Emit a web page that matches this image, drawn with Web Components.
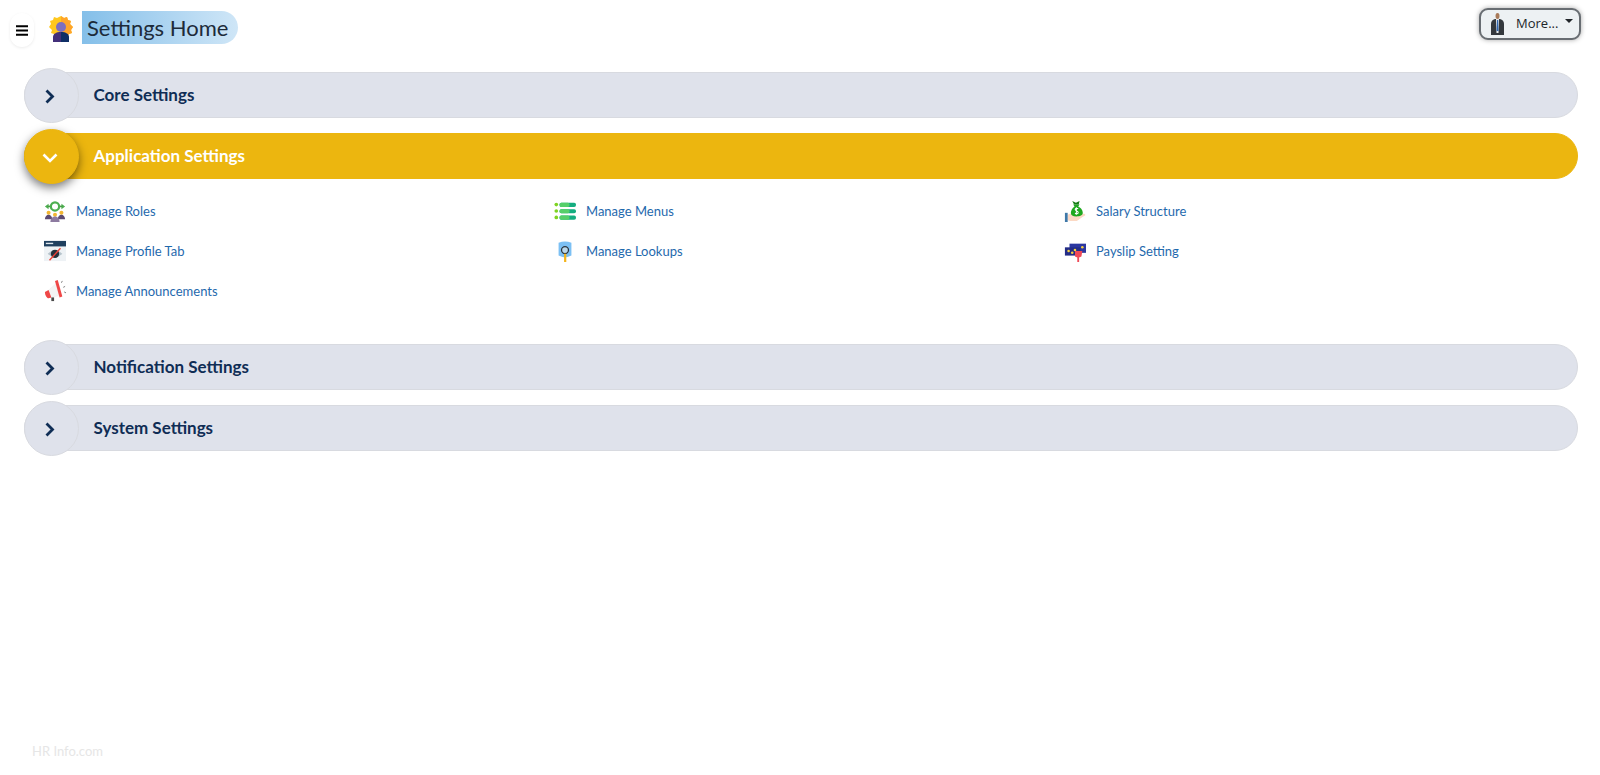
<!DOCTYPE html>
<html lang="en">
<head>
<meta charset="utf-8">
<title>Settings Home</title>
<style>
  html, body { margin:0; height:100%; background:#fff; font-family:Lato,"Open Sans",sans-serif; }
  body { display:flex; flex-direction:column; height:775px; overflow:hidden; }
  main { display:block; padding:0 22px 0 24px; flex:1; }
</style>
</head>
<body>
<app-header title-text="Settings Home"></app-header>
<main>
  <settings-section label="Core Settings"></settings-section>
  <settings-section label="Application Settings" open>
    <settings-link label="Manage Roles">
      <svg viewBox="0 0 24 24"><path d="M1 7l4-3v6zM23 7l-4-3v6z" fill="#4caf50"/><path d="M4 7h16" stroke="#4a9a45" stroke-width="1.800"/><circle cx="12" cy="7" r="4.500" fill="#fff" stroke="#4caf50" stroke-width="2.400"/><circle cx="5" cy="14" r="2.200" fill="#f2b632"/><circle cx="19" cy="14" r="2.200" fill="#f2b632"/><circle cx="12" cy="16" r="2.200" fill="#f2b632"/><path d="M1 21c0-3 2-5 4-5s4 2 4 5zM15 21c0-3 2-5 4-5s4 2 4 5z" fill="#5c4a72"/><path d="M7 24c0-3 2-6 5-6s5 3 5 6z" fill="#8d7aa0"/></svg>
    </settings-link>
    <settings-link label="Manage Menus">
      <svg viewBox="0 0 24 24"><circle cx="2.500" cy="5" r="2" fill="#7ed321"/><circle cx="2.500" cy="12" r="2" fill="#7ed321"/><circle cx="2.500" cy="19" r="2" fill="#7ed321"/><rect x="6" y="3" width="18" height="4.500" rx="2" fill="#14ad80"/><rect x="6" y="10" width="18" height="4.500" rx="2" fill="#14ad80"/><rect x="6" y="17" width="18" height="4.500" rx="2" fill="#14ad80"/><rect x="6" y="3" width="11" height="4.500" rx="2" fill="#55cf6a"/><rect x="6" y="10" width="11" height="4.500" rx="2" fill="#55cf6a"/><rect x="6" y="17" width="11" height="4.500" rx="2" fill="#55cf6a"/></svg>
    </settings-link>
    <settings-link label="Salary Structure">
      <svg viewBox="0 0 24 24"><path d="M4 16c4-2 7-1 9 0l8-1c3 0 3 2 0 3l-7 5H7l-3-1z" fill="#fcd9c4"/><rect x="1" y="14" width="3" height="10" fill="#3f78a8"/><path d="M10 5h7l-1.500 2c4 2 5 5 5 7 0 3-3 4-7 4s-6-1-6-4c0-2 1-5 4-7z" fill="#1fa81f"/><path d="M9 1l4 2 4-2-1 4h-5z" fill="#157a15"/><path d="M15.500 9.500c-2-1-4 0-3 1.500s3 1 3 2.500-2 2-3.500 1M13.500 8v8" fill="none" stroke="#fff" stroke-width="1.100"/></svg>
    </settings-link>
    <settings-link label="Manage Profile Tab">
      <svg viewBox="0 0 24 24"><rect x="0" y="1" width="24" height="22" fill="#eef2f5"/><rect x="0" y="1" width="24" height="6" fill="#20405f"/><rect x="2" y="3" width="8" height="1.500" fill="#dfe7ee"/><path d="M4 15q8-8 16 0q-8 8-16 0z" fill="#b7c4cc"/><circle cx="12" cy="15" r="4.500" fill="#26323c"/><path d="M6 22L18 9" stroke="#ef4135" stroke-width="1.500"/></svg>
    </settings-link>
    <settings-link label="Manage Lookups">
      <svg viewBox="0 0 24 24"><path d="M5 3q7-3 14 0v14q-7 4-14 0z" fill="#7cc0f4"/><circle cx="12" cy="11" r="3.800" fill="#b9d7ea" stroke="#29333d" stroke-width="1.400"/><rect x="11" y="15" width="2.400" height="9" fill="#f4b41a"/></svg>
    </settings-link>
    <settings-link label="Payslip Setting">
      <svg viewBox="0 0 24 24"><rect x="6" y="4" width="18" height="10" fill="#2b36a0"/><rect x="1" y="8" width="17" height="9" fill="#232c86"/><circle cx="5" cy="12" r="1.400" fill="#f7d23e"/><circle cx="9" cy="14" r="1.400" fill="#f7d23e"/><circle cx="12" cy="11" r="1.400" fill="#f7d23e"/><circle cx="20" cy="8" r="1.400" fill="#f7d23e"/><path d="M12 12h8l-1 6-2.500 1v5h-2v-5l-2.500-1z" fill="#ef4a58"/></svg>
    </settings-link>
    <settings-link label="Manage Announcements">
      <svg viewBox="0 0 24 24"><path d="M4 12L13 4l4 13-10 2z" fill="#f4f4f4" stroke="#e9e9e9" stroke-width=".5"/><path d="M12 1l3-1 5 18-3 1z" fill="#ef4747"/><path d="M1 13l4-2 3 8-3 1c-2 0-4-4-4-7z" fill="#ef4747"/><rect x="8" y="19" width="3" height="4" fill="#4a4a4a"/><path d="M19 3l1-2M21 8l2-1M22 13l2 1" stroke="#777" stroke-width="1"/></svg>
    </settings-link>
  </settings-section>
  <settings-section label="Notification Settings"></settings-section>
  <settings-section label="System Settings"></settings-section>
</main>
<app-footer>HR Info.com</app-footer>

<script>
// page header: hamburger, logo, title pill, and the "More..." user button
class AppHeader extends HTMLElement {
  connectedCallback() {
    this.attachShadow({ mode: 'open' });
    const title = this.getAttribute('title-text') || '';
    this.shadowRoot.innerHTML = `
      <style>
        :host { display:flex; align-items:flex-start; justify-content:space-between; height:72px; padding:8px 19px 0 10px; box-sizing:border-box; }
        .left { display:flex; align-items:center; height:39px; }
        .burger { width:24px; height:34px; margin-top:5px; border-radius:12px; background:#fff; box-shadow:0 1px 3px rgba(0,0,0,.08); display:flex; align-items:center; justify-content:center; }
        .logo { margin:3px 0 0 15px; width:24px; height:26px; display:block; }
        h1 { margin:0 0 0 9px; height:33px; padding:0 10px 0 5px; display:flex; align-items:center; box-sizing:border-box;
             font:400 22px Lato,"Open Sans",sans-serif; color:#1d2b3a;
             background:linear-gradient(90deg,#84bfe9,#cfe6f7); border-radius:0 17px 17px 0; }
        button { display:flex; align-items:center; width:102px; height:32px; box-sizing:border-box; padding:0 0 0 10px;
                 background:#edf1f3; border:2px solid #686d72; border-radius:9px; box-shadow:0 0 5px rgba(0,0,0,.35);
                 font:13px "Open Sans",sans-serif; color:#212529; }
        .label { margin-left:12px; position:relative; top:-1px; }
        .caret { margin-left:7px; width:0; height:0; border:4px solid transparent; border-top-color:#212529; border-bottom:0; position:relative; top:-3px; }
      </style>
      <div class="left">
        <div class="burger">
          <svg width="12" height="11" viewBox="0 0 12 11"><path d="M0 1.200h12M0 5.500h12M0 9.800h12" stroke="#000" stroke-width="2"/></svg>
        </div>
        <svg class="logo" viewBox="0 0 24 26">
          <path d="M12 0l3 2 3-1 1 3 3 1-1 3 3 3-2 3 1 3-3 1-2 3H7l-2-3-3-1 1-3-3-3 2-3-1-3 3-1 1-3 3 1z" fill="#ffc81e"/>
          <path d="M12 0l3 2 3-1 1 3 3 1-1 3 3 3-2 3 1 3-3 1-2 3h-6z" fill="#ffa42a"/>
          <circle cx="12" cy="11" r="5" fill="#7d6fc0"/>
          <path d="M4 26v-5c0-3 3-5 8-5v10z" fill="#43307a"/>
          <path d="M20 26v-5c0-3-3-5-8-5v10z" fill="#0f2f66"/>
        </svg>
        <h1>${title}</h1>
      </div>
      <button type="button">
        <svg width="13" height="22" viewBox="0 0 13 22">
          <path d="M0 22V11q0-4 4-5h5q4 1 4 5v11z" fill="#33383d"/>
          <path d="M5 6h3l-.5 14h-2z" fill="#e7ecf0"/>
          <path d="M6 7h1.200l.3 11h-1.800z" fill="#2f66b0"/>
          <ellipse cx="6.500" cy="3" rx="2" ry="3" fill="#a97b5a"/>
        </svg>
        <span class="label">More...</span>
        <span class="caret"></span>
      </button>`;
  }
}

// one accordion row: pill bar + round toggle, body shows when "open"
class SettingsSection extends HTMLElement {
  connectedCallback() {
    this.attachShadow({ mode: 'open' });
    const label = this.getAttribute('label') || '';
    const open = this.hasAttribute('open');
    this.shadowRoot.innerHTML = `
      <style>
        :host { display:block; margin-bottom:15px; }
        .bar { position:relative; height:46px; box-sizing:border-box; border-radius:23px; padding-left:68.500px; padding-bottom:2px; display:flex; align-items:center;
               background:#dfe2eb; border:1px solid #d8dae0; color:#0f2d55; font:700 17px Lato,"Open Sans",sans-serif; }
        .circle { position:absolute; left:-1px; top:-5px; width:55px; height:55px; border-radius:50%; box-sizing:border-box; background:#dfe2eb;
                  border:1px solid #d8dae0; display:flex; align-items:center; justify-content:center; }
        .circle svg { margin:2px 3px 0 0; }
        :host([open]) .bar { background:#ecb60f; border-color:#ecb60f; color:#fff; }
        :host([open]) .circle { background:#ecb60f; border-color:#ecb60f; box-shadow:0 4px 10px rgba(0,0,0,.5); }
        .body { display:grid; grid-template-columns:510px 510px 1fr; padding:12px 0 18px 20px; }
      </style>
      <div class="bar">
        <div class="circle">
          ${open
            ? '<svg width="16" height="10" viewBox="0 0 16 10"><path d="M1.500 1.500l6.500 6.500 6.500-6.500" fill="none" stroke="#fff" stroke-width="2.600"/></svg>'
            : '<svg width="10" height="15" viewBox="0 0 10 15"><path d="M1.500 1.500l6 6-6 6" fill="none" stroke="#0f2d55" stroke-width="2.800"/></svg>'}
        </div>
        <span>${label}</span>
      </div>
      ${open ? '<div class="body"><slot></slot></div>' : ''}`;
  }
}

// icon + blue link inside an open section
class SettingsLink extends HTMLElement {
  connectedCallback() {
    this.attachShadow({ mode: 'open' });
    this.shadowRoot.innerHTML = `
      <style>
        :host { display:flex; align-items:center; height:40px; }
        .icon { width:22px; height:22px; display:flex; }
        ::slotted(svg) { width:22px; height:22px; }
        a { margin-left:10px; color:#1f69ad; font:400 13px Lato,"Open Sans",sans-serif; text-decoration:none; }
      </style>
      <span class="icon"><slot></slot></span>
      <a href="#">${this.getAttribute('label') || ''}</a>`;
  }
}

class AppFooter extends HTMLElement {
  connectedCallback() {
    this.attachShadow({ mode: 'open' });
    this.shadowRoot.innerHTML = `
      <style>
        :host { display:block; padding:0 0 16px 32px; color:#e6e6e6; font:13px Lato,"Open Sans",sans-serif; }
      </style>
      <slot></slot>`;
  }
}

customElements.define('app-header', AppHeader);
customElements.define('settings-section', SettingsSection);
customElements.define('settings-link', SettingsLink);
customElements.define('app-footer', AppFooter);
</script>
</body>
</html>
